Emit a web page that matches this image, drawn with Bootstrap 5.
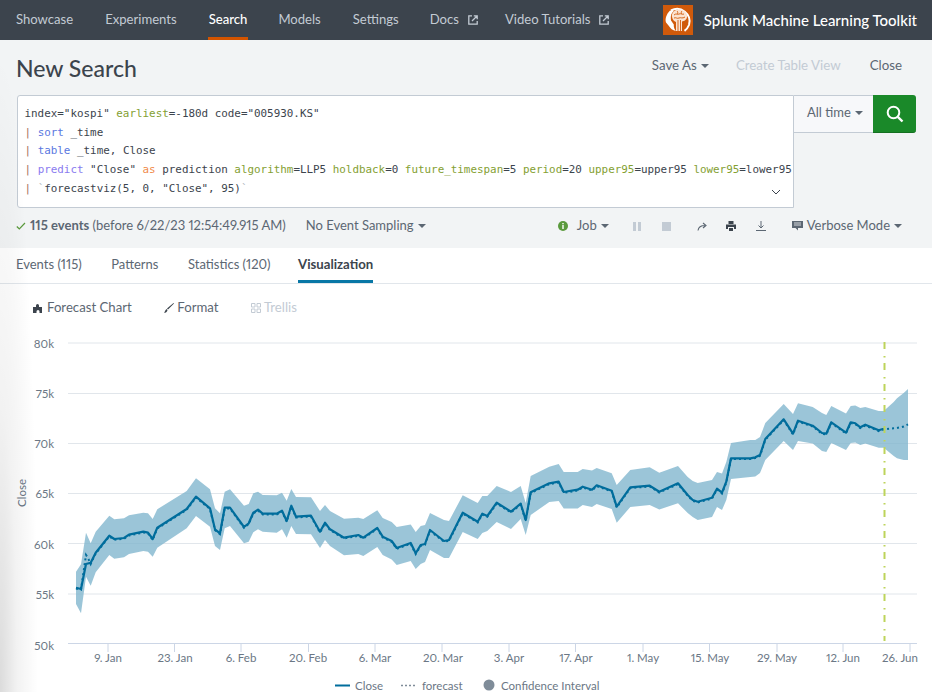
<!DOCTYPE html>
<html lang="en">
<head>
<meta charset="utf-8">
<title>New Search</title>
<link href="https://cdn.jsdelivr.net/npm/bootstrap@5.3.0/dist/css/bootstrap.min.css" rel="stylesheet">
<style>
html,body{height:692px;overflow:hidden;}
body{font-family:"Lato","Open Sans",sans-serif;font-size:13px;color:#3c444d;background:#fff;position:relative;font-feature-settings:"pnum";}
.topbar{height:40px;background:#3c444d;padding:0 15px 0 16px;}
.toplink{color:#c3cbd4;text-decoration:none;height:40px;display:flex;align-items:center;font-size:13.1px;margin-right:32px;white-space:nowrap;}
.toplink.on{color:#fff;font-weight:500;border-bottom:3px solid #d35400;padding:3px 1px 0;margin:0 30px 0 -1px;}
.toplink.tight{margin-right:31px;}
.toplink svg{margin-left:9px;margin-right:-5px;}
.apptitle{color:#fff;font-size:15px;font-weight:500;margin-left:11px;white-space:nowrap;}
.headzone{background:#f2f4f5;height:208px;}
.titlerow{height:55px;padding:2px 30px 0 16px;}
.pagetitle{font-size:23px;font-weight:500;margin:0;color:#3c444d;}
.hlinks{margin-bottom:5px;}
.hlink{font-size:13.3px;color:#5c6773;}
.hlink.off{color:#c3cbd4;margin-right:1px;}
.saveas{margin-right:-1px;}
.caretdn{display:inline-block;border-left:4px solid transparent;border-right:4px solid transparent;border-top:4px solid currentColor;vertical-align:2px;margin-left:4px;}
.searchrow{padding:0 16px 0 17px;}
.splbox{flex:0 0 777px;height:113px;background:#fff;border:1px solid #c3cbd4;border-radius:3px 0 0 3px;padding:9px 0 0 6.5px;position:relative;overflow:hidden;}
.splline{font-family:"DejaVu Sans Mono",monospace;font-size:10.9px;line-height:18.7px;white-space:nowrap;color:#3c444d;}
.p{color:#a8705a}.c1{color:#5a77df}.c2{color:#8a7bef}.k{color:#f08a4b}.a{color:#84a032}.q{color:#b0b6bc}
.splchev{position:absolute;right:12px;bottom:12px;}
.timebtn{width:79px;height:38px;background:#f7f8fa;border-bottom:1px solid #c3cbd4;border-top:1px solid #c3cbd4;font-size:13px;color:#5c6773;padding-left:13px;line-height:33px;white-space:nowrap;}
.gobtn{width:43px;height:38px;background:#1a8929;border-radius:0 3px 3px 0;border-bottom:1px solid #157021;}
.statusrow{height:40px;padding:0 30px 4px 16px;font-size:13px;color:#5c6773;position:relative;}
.statusrow b{font-weight:700;}
.samplink{margin-left:20px;}
.jobtxt{margin-left:9px;}
.ig1{margin-left:24px;}.ig2{margin-left:21px;}.ig3{margin-left:26px;}.ig4{margin-left:19px;}.ig5{margin-left:20px;}.ig6{margin-left:26px;}
.tabbar{height:36px;border-bottom:1px solid #e1e6eb;padding-left:16px;background:#fff;}
.tabx{height:35px;line-height:32px;margin-right:29.5px;font-size:13px;color:#5c6773;white-space:nowrap;}
.tabx.snug{margin-right:27.5px;}
.tabx.on{font-weight:700;font-size:13.2px;color:#3c444d;border-bottom:3px solid #0877a6;}
.vizbar{height:46px;padding:2px 0 0 33px;font-size:13.2px;color:#5c6773;}
.vizbar .off{color:#c3cbd4;}
.vgap{margin-left:32px;}
.vtxt{margin-left:3.5px;}
.chartsvg{display:block;width:932px;height:362px;}
.chartsvg text{font-family:"Lato","Open Sans",sans-serif;font-size:11.5px;fill:#6b7785;}
.edgeshade{position:absolute;left:0;top:40px;bottom:0;width:40px;background:radial-gradient(ellipse 38px 640px at 0 100%,rgba(0,0,0,.14),rgba(0,0,0,.05) 45%,transparent 100%);pointer-events:none;}
</style>
</head>
<body>
<nav class="topbar d-flex align-items-center">
  <a class="toplink" href="#">Showcase</a>
  <a class="toplink" href="#">Experiments</a>
  <a class="toplink on" href="#">Search</a>
  <a class="toplink" href="#">Models</a>
  <a class="toplink tight" href="#">Settings</a>
  <a class="toplink" href="#">Docs<svg width="10" height="10" viewBox="0 0 10 10" fill="none" stroke="#c3cbd4" stroke-width="1.3"><path d="M4 .8H.8v8.4h8.4V6M4 6l5-5M5.800.8h3.400v3.400"/></svg></a>
  <a class="toplink" href="#">Video Tutorials<svg width="10" height="10" viewBox="0 0 10 10" fill="none" stroke="#c3cbd4" stroke-width="1.3"><path d="M4 .8H.8v8.4h8.4V6M4 6l5-5M5.800.8h3.400v3.400"/></svg></a>
  <div class="ms-auto d-flex align-items-center">
    <svg width="30" height="30" viewBox="0 0 30 30">
      <rect width="30" height="30" fill="#d05a0b"/>
      <path d="M8 5.500A12.500 12.500 0 0 1 26 20c-1 2.500-2.500 4.500-4.500 5.800" fill="none" stroke="#fff" stroke-width="2"/>
      <path d="M7 5.500C3.500 9 1.800 14 3 17.500l2.500 3c2 3 4 5 7.500 5.500-1.500-1.500-2.500-4-2.200-6.500L8 15.500C7.500 11 8 8 11 6z" fill="#fff"/>
      <path d="M9 12c-1-4 3-7.500 7-7.500 4.500 0 8.500 3 8 7.500-.3 3-2.800 4-5 4.500V26h-6v-9c-2-.5-3.500-2.500-4-5z" fill="#fbe3d1"/>
      <path d="M11 10c2-2 3 0 5-1s3 1 5 0M11 13c2-1 3 1 5 0s3 1 6-1M15 15v11M17.500 15v11M14 6c1 1 1 2 0 3M19 6c-1 1-1 2 0 3" fill="none" stroke="#d05a0b" stroke-width=".9"/>
    </svg>
    <span class="apptitle">Splunk Machine Learning Toolkit</span>
  </div>
</nav>

<div class="headzone">
  <div class="titlerow d-flex align-items-center justify-content-between">
    <h1 class="pagetitle">New Search</h1>
    <div class="hlinks d-flex align-items-center">
      <span class="hlink saveas">Save As<span class="caretdn"></span></span>
      <span class="hlink off ms-4 ps-1">Create Table View</span>
      <span class="hlink ms-4 ps-1">Close</span>
    </div>
  </div>
  <div class="searchrow d-flex align-items-start">
    <div class="splbox">
      <div class="splline">index="kospi" <span class="a">earliest</span>=-180d code="005930.KS"</div>
      <div class="splline"><span class="p">|</span> <span class="c1">sort</span> _time</div>
      <div class="splline"><span class="p">|</span> <span class="c1">table</span> _time, Close</div>
      <div class="splline"><span class="p">|</span> <span class="c2">predict</span> "Close" <span class="k">as</span> prediction <span class="a">algorithm</span>=LLP5 <span class="a">holdback</span>=0 <span class="a">future_timespan</span>=5 <span class="a">period</span>=20 <span class="a">upper95</span>=upper95 <span class="a">lower95</span>=lower95</div>
      <div class="splline"><span class="p">|</span> <span class="q">`</span>forecastviz(5, 0, "Close", 95)<span class="q">`</span></div>
      <svg class="splchev" width="10" height="6" viewBox="0 0 10 6" fill="none" stroke="#3c444d" stroke-width="1"><path d="M1 1l4 4 4-4"/></svg>
    </div>
    <div class="timebtn">All time<span class="caretdn"></span></div>
    <div class="gobtn d-flex align-items-center justify-content-center">
      <svg width="18" height="18" viewBox="0 0 18 18" fill="none" stroke="#fff" stroke-width="2"><circle cx="7.500" cy="7.500" r="5.800"/><path d="M11.800 11.800L16.500 16.500" stroke-width="2.400"/></svg>
    </div>
  </div>
  <div class="statusrow d-flex align-items-center">
    <svg width="10" height="8" viewBox="0 0 10 8" fill="none" stroke="#5a9a3c" stroke-width="1.200" class="me-1"><path d="M.8 4.500l2.500 2.500L9 1"/></svg>
    <span><b>115 events</b> (before 6/22/23 12:54:49.915 AM)</span>
    <span class="samplink">No Event Sampling<span class="caretdn"></span></span>
    <div class="ms-auto d-flex align-items-center">
      <svg width="10" height="10" viewBox="0 0 10 10"><circle cx="5" cy="5" r="5" fill="#5a9a3c"/><path d="M4.300 2h1.400v1.200H4.300zM4.300 4h1.400v4H4.300z" fill="#fff"/></svg>
      <span class="jobtxt">Job<span class="caretdn"></span></span>
      <svg class="ig1" width="8" height="9" viewBox="0 0 8 9" fill="#c3cbd4"><rect x="0" width="3" height="9"/><rect x="5" width="3" height="9"/></svg>
      <svg class="ig2" width="9" height="9" viewBox="0 0 9 9" fill="#c3cbd4"><rect width="9" height="9"/></svg>
      <svg class="ig3" width="10" height="9" viewBox="0 0 10 9" fill="none" stroke="#5c6773" stroke-width="1.100"><path d="M1 8.500C1.500 5 4 3.500 8 3.500M6 1l3 2.500L6 6"/></svg>
      <svg class="ig4" width="10" height="10" viewBox="0 0 10 10" fill="#3c444d"><path d="M2.500 0h5v3h-5zM0 3.500h10v4.500H8V6H2v2H0zM3 7h4v3H3z"/></svg>
      <svg class="ig5" width="10" height="10" viewBox="0 0 10 10" fill="none" stroke="#5c6773" stroke-width="1"><path d="M5 0v7M2.500 4.500L5 7l2.500-2.500M0 9.500h10"/></svg>
      <svg class="ig6" width="11" height="10" viewBox="0 0 11 10" fill="#5c6773"><path d="M0 0h11v7H6v2.500L3.500 7H0z"/><path d="M2 2h7M2 4h7" stroke="#f2f4f5" stroke-width=".8"/></svg>
      <span class="ms-1">Verbose Mode<span class="caretdn"></span></span>
    </div>
  </div>
</div>

<div class="tabbar d-flex">
  <div class="tabx">Events (115)</div>
  <div class="tabx">Patterns</div>
  <div class="tabx snug">Statistics (120)</div>
  <div class="tabx on">Visualization</div>
</div>

<div class="vizbar d-flex align-items-center">
  <svg width="10" height="10" viewBox="0 0 10 10" fill="#3c444d"><path d="M0 4h3V2.500a1.500 1.500 0 0 1 3 0V4h3v6H6.500V8.500a1.300 1.300 0 0 0-3 0V10H0z"/></svg>
  <span class="ms-1">Forecast Chart</span>
  <svg class="vgap" width="10" height="10" viewBox="0 0 10 10" fill="#3c444d"><path d="M9.500 0L10 .500 4 6.500 3 5.500zM2.500 6l1 1C3.300 9 1.500 9.800 0 9.800 1 9 1 7 2.500 6z"/></svg>
  <span class="vtxt">Format</span>
  <svg class="vgap" width="10" height="10" viewBox="0 0 10 10" fill="none" stroke="#c3cbd4" stroke-width="1"><path d="M.5.500h3.500v3.500H.5zM6 .500h3.500v3.500H6zM.5 6h3.500v3.500H.5zM6 6h3.500v3.500H6z"/></svg>
  <span class="off vtxt">Trellis</span>
</div>

<svg class="chartsvg" viewBox="0 330 932 362" id="chart">
  <g stroke="#e1e6eb" stroke-width="1">
    <path d="M68 343H917M68 393.500H917M68 443.500H917M68 493.500H917M68 543.500H917M68 594H917"/>
  </g>
  <path d="M68 643.500H917M108 644V652M174.500 644V652M241 644V652M308.500 644V652M375 644V652M442 644V652M509 644V652M575.500 644V652M643 644V652M709.500 644V652M777 644V652M843 644V652M910 644V652" stroke="#ccd6e6" stroke-width="1" fill="none"/>
  <g text-anchor="end">
    <text x="54" y="348">80k</text><text x="54" y="398">75k</text><text x="54" y="448">70k</text><text x="54" y="498">65k</text><text x="54" y="549">60k</text><text x="54" y="599">55k</text><text x="54" y="650">50k</text>
  </g>
  <text transform="translate(26,493) rotate(-90)" text-anchor="middle">Close</text>
  <g text-anchor="middle">
    <text x="108" y="662">9. Jan</text><text x="175" y="662">23. Jan</text><text x="241" y="662">6. Feb</text><text x="308" y="662">20. Feb</text><text x="375" y="662">6. Mar</text><text x="443" y="662">20. Mar</text><text x="509" y="662">3. Apr</text><text x="576" y="662">17. Apr</text><text x="643" y="662">1. May</text><text x="710" y="662">15. May</text><text x="777" y="662">29. May</text><text x="843" y="662">12. Jun</text><text x="900" y="662">26. Jun</text>
  </g>
  <path id="band" fill="#7fb5cd" fill-opacity=".78"/>
  <path id="lineclose" fill="none" stroke="#006d9c" stroke-width="2.200" stroke-linejoin="round"/>
  <path id="linefc" fill="none" stroke="#006d9c" stroke-width="2" stroke-dasharray="2,3"/>
  <path d="M884.500 342V641" stroke="#bdd45a" stroke-width="2" stroke-dasharray="7,7,1.500,5.500" fill="none"/>
  <path d="M335 685.500H350" stroke="#006d9c" stroke-width="2"/>
  <path d="M401 685.500H415" stroke="#7f8c99" stroke-width="1.600" stroke-dasharray="2,2"/>
  <circle cx="489" cy="685" r="5.500" fill="#7f8c99"/>
  <text x="355" y="690">Close</text><text x="422" y="690">forecast</text><text x="501" y="690">Confidence Interval</text>
</svg>
<div class="edgeshade"></div>
<script>
var d=[[76,587.7,571.7,604],[81,589,564.3,613.3],[86,564,532.7,576.7],[90.7,562.7,543.3,585.7],[95.7,552.7,531.7,572.3],[109.3,535.7,515.7,555],[114.3,539,519.3,558.7],[124,538,518.3,557.3],[129,534.7,515.3,554],[143.3,531.7,512.7,551],[148,532.7,513.3,551.7],[152.7,539,519,556.7],[157.3,527.7,509.3,547.7],[186.7,509,491,528.3],[196,496.7,478.3,516],[210,508.3,489.3,526.7],[215,529.3,508.3,546],[220,533.3,513.3,550],[224.7,507.7,491.7,528.3],[230,507.7,489.3,526],[244,527,505.7,543.3],[248.7,523.3,504,541.7],[253.3,512.7,493.3,532.3],[258,509.7,491.7,529.3],[262.7,513.7,495,531.7],[276.7,513.7,495.3,532.7],[282,510.7,492.7,529.3],[286.7,521,500.7,537.7],[291.3,505.7,489,526],[296,516.7,497,534],[311,515.7,497.3,534.3],[320,531.7,511,548],[325,522.7,505,540],[330,529.3,511,546],[344,537.7,518.7,555.3],[358.3,535,517.7,554],[363.3,537.7,519,556],[377.3,528,510.3,547],[382.7,536.7,518,555],[391.7,541,522,559.5],[396.7,548,527,565],[410.7,543,524.5,561],[415.7,553.3,532,569],[420.7,545,526,564],[425,544,525,562],[430,530,513,550],[444,541,520,558],[449,540,521,558],[462.7,512.7,495.3,532],[477.7,521.7,503,539],[482.3,513.7,496,533],[487.3,516,496,531],[496.7,502.7,486,522],[511,511.7,492,529],[520.7,503.7,486,519],[525.7,520,503,535],[530.7,492.3,476,515],[549.3,483.3,466.7,502],[558.7,481.7,464,501],[563.7,492,472,508.5],[577.7,489.7,472,508.5],[582.7,486.7,469,505],[592,489.7,470.5,507],[596.7,485.3,468,504],[611.7,490.7,473.3,509],[616.7,506.7,485,522.7]];
var d2=[[630.3,487.3,470,507],[649.7,485.7,467.3,505],[659.3,491.7,472.7,509.5],[678,483.3,466,503.3],[687.7,495,477,513],[692.7,500,481,517],[697.7,501.7,483,520],[712,497.7,480,517],[717,488.7,472,507],[722,492.7,473.5,510],[726.3,481.7,462,500],[731,458.3,443,479],[750.3,458.3,440,477],[755.3,457.3,440,476.5],[760,455,437,473],[765.3,439,423,460],[783.7,419.3,404,441],[793,433.7,414,450],[798,420.7,403.3,441],[812.7,425.7,407,443.5],[822,433,413,451],[826.3,433.7,415,452],[831.3,422.3,406,443],[846,432.7,413.5,450],[850.7,422.3,406,443],[855.3,423.3,405.5,442.5],[860.3,427.3,408,445],[865.3,424.7,407,443.5],[878.7,430.3,411,447.7],[883.7,428.7,411,447.7]];
var all=d.concat(d2);
function pl(a){return a.map(function(p,i){return (i?'L':'M')+p[0]+' '+p[1];}).join('');}
var fut=[[893.7,428.3,402,456],[897,428,398.3,458.3],[903.7,426.5,393,460],[908,424.3,389,460]];
var b=all.concat(fut);
var up=b.map(function(p){return [p[0],p[2]];});
var lo=b.map(function(p){return [p[0],p[3]];}).reverse();
document.getElementById('band').setAttribute('d',pl(up)+pl(lo).replace('M','L')+'Z');
document.getElementById('lineclose').setAttribute('d',pl(all));
var f=all.map(function(p){return [p[0],p[1]+.8];});
f.splice(2,2,[86,555],[88,558],[90.7,564]);
document.getElementById('linefc').setAttribute('d',pl(f.concat(fut)));
</script>
<script src="https://cdn.jsdelivr.net/npm/bootstrap@5.3.0/dist/js/bootstrap.bundle.min.js"></script>
</body>
</html>
